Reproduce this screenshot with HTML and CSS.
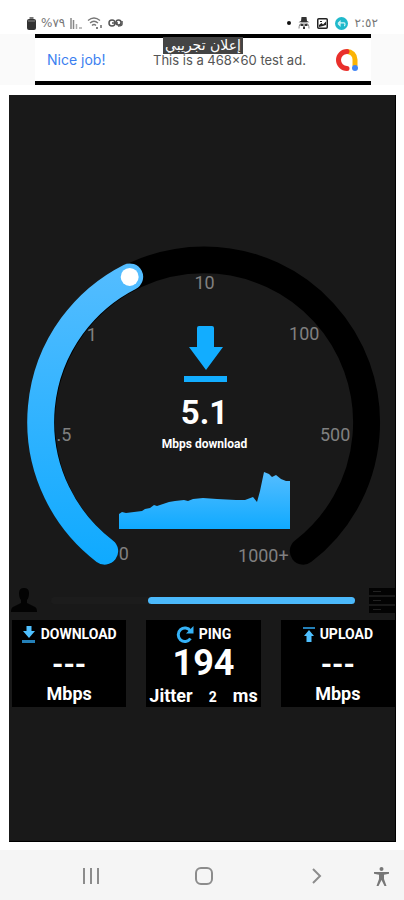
FILE: index.html
```html
<!DOCTYPE html>
<html lang="en">
<head>
<meta charset="utf-8">
<meta name="viewport" content="width=device-width, initial-scale=1">
<title>Speed test</title>
<link rel="stylesheet" href="styles.css">
</head>
<body>
<div class="screen">
  <header class="status">
    <div class="status-group">
      <svg class="ico" width="9" height="13" viewBox="0 0 9 13"><path d="M2.500 0h4v2h-4z" fill="#777"/><rect y="2" width="9" height="11" rx="2" fill="#333"/><path d="M1 4h7" stroke="#888"/></svg>
      <bdi class="status-text" dir="ltr">%٧٩</bdi>
      <svg class="ico" width="12" height="11" viewBox="0 0 12 11"><path d="M1 0v11M3.500 2v9" stroke="#888" stroke-width="1.500"/><path d="M6.500 6v5M9 10h3" stroke="#aaa" stroke-width="1.500"/></svg>
      <svg class="ico" width="16" height="12" viewBox="0 0 16 12" fill="none" stroke="#777" stroke-width="1.300"><path d="M1 3.500q6-5 12 0M3 6q4-3.500 8 0M5 8.500q2-2 4 0"/><path d="M9 11h2M14 8v3" stroke="#555"/></svg>
      <svg class="ico" width="15" height="8" viewBox="0 0 15 8" fill="none" stroke="#555" stroke-width="1.500"><circle cx="4" cy="4" r="3"/><circle cx="10.500" cy="3.500" r="2.500"/><path d="M4 4h6M14 2v3q0 2-4 2"/></svg>
    </div>
    <div class="status-group status-end">
      <svg class="ico" width="4" height="4" viewBox="0 0 4 4"><circle cx="2" cy="2" r="2" fill="#111"/></svg>
      <svg class="ico" width="12" height="12" viewBox="0 0 12 12"><path d="M3.500 0h5L9 4l2.500 1.200H.5L3 4z" fill="#333"/><path d="M1 11.500q0-5 3-5.500h4q3 .5 3 5.500" fill="none" stroke="#888"/><path d="M2.500 7h3v2h-3zM6.500 7h3v2h-3zM5 9.500h2V12H5z" fill="#333"/></svg>
      <svg class="ico" width="11" height="11" viewBox="0 0 11 11"><rect x=".75" y=".75" width="9.500" height="9.500" rx="1" fill="#fff" stroke="#222" stroke-width="1.500"/><path d="M2 9V7l2.500-2L6 6.500 9 3.500V7L6 8z" fill="#222"/><path d="M3 3.500h2" stroke="#222"/></svg>
      <svg class="ico" width="13" height="13" viewBox="0 0 13 13"><circle cx="6.500" cy="6.500" r="6.500" fill="#1fb9cb"/><path d="M3 6.500l2-2v1.300h4q1 0 1 1.500t-1 1.500M5 5.500v3l-2-2" fill="none" stroke="#d8f5f8" stroke-width="1.200"/></svg>
      <bdi class="status-text" dir="ltr">٢:٥٢</bdi>
    </div>
  </header>

  <div class="ad-band">
    <a class="ad" href="#">
      <span class="ad-title">Nice job!</span>
      <span class="ad-text">This is a 468x60 test ad.</span>
      <svg class="ad-logo" width="22" height="22" viewBox="0 0 22 22" fill="none" stroke-width="5"><path d="M11 2.500a8 8 0 0 1 8 8V17" stroke="#fbb305"/><path d="M11 2.500a8.500 8.500 0 1 0 0 17" stroke="#e92f2b" stroke-linecap="round"/><circle cx="19" cy="19" r="3" fill="#4285f4"/></svg>
      <span class="ad-tag" lang="ar" dir="rtl">إعلان تجريبي</span>
    </a>
  </div>

  <main class="panel">
    <section class="gauge">
      <svg class="dial" viewBox="-195 -182 387 340" role="img" aria-label="Download speed gauge">
        <defs>
          <linearGradient id="arc" gradientUnits="userSpaceOnUse" x1="0" y1="-160" x2="0" y2="140"><stop offset="0" stop-color="#55bdff"/><stop offset="1" stop-color="#10aaff"/></linearGradient>
        </defs>
        <path class="track" d="M-99 130A163 163 0 1 1 100 130"/>
        <path class="value" d="M-99 130A163 163 0 0 1-74-145"/>
        <circle cx="-74" cy="-145" r="9" fill="#fff"/>
        <g class="tick">
          <text x="1" y="-133">10</text>
          <text x="-112" y="-81">1</text>
          <text x="101" y="-82">100</text>
          <text x="-140" y="20">.5</text>
          <text x="132" y="20">500</text>
          <text x="-80" y="139">0</text>
          <text x="60" y="141">1000+</text>
        </g>
      </svg>
      <div class="readout">
        <svg width="44" height="57" viewBox="0 0 44 57"><path d="M16 0h13q2 0 2 2v19h9L23 44 6 21h8V2q0-2 2-2z" fill="#12adff"/><path d="M1 50h43v6H1z" fill="#12adff"/></svg>
        <strong class="speed">5.1</strong>
        <span class="speed-unit">Mbps download</span>
        <svg class="chart" width="171" height="58" viewBox="0 0 171 58"><defs><linearGradient id="area" x1="0" y1="0" x2="0" y2="1"><stop offset="0" stop-color="#55bdff"/><stop offset="1" stop-color="#10aaff"/></linearGradient></defs><path d="M0 58V43L3 41 7 42 15 41 23 40 26 38 31 37 35 34 38 35 44 33 50 31 56 30 65 29 69 30 74 28 84 27 98 28 117 29 126 29 134 26 138 31 141 20 145 1 150 3 153 6 157 4 162 8 167 10 171 10V58z" fill="url(#area)"/></svg>
      </div>
    </section>

    <section class="progress-row">
      <svg width="26" height="24" viewBox="0 0 26 24"><path d="M8 5q0-5 5-5t5 5q0 5-2 7v3l8 4q2 1 2 5H0q0-4 2-5l8-4v-3q-2-2-2-7z" fill="#030303"/></svg>
      <div class="progress"><div class="progress-fill"></div></div>
      <svg width="26" height="25" viewBox="0 0 26 25"><path d="M0 0h26v7H0zM0 9h26v7H0zM0 18h26v7H0z" fill="#030303"/><path d="M4 3.500h8M4 12.500h8M4 21.500h8" stroke="#222"/></svg>
    </section>

    <section class="cards">
      <article class="card">
        <h2 class="card-title"><svg width="14" height="17" viewBox="0 0 14 17"><path d="M4.500 0h5v5H13l-6 7-6-7h3.500z" fill="#4fc0ff"/><path d="M0 15.500h13" stroke="#2480b8" stroke-width="3"/></svg>DOWNLOAD</h2>
        <p class="card-value card-empty">---</p>
        <p class="card-unit">Mbps</p>
      </article>
      <article class="card">
        <h2 class="card-title"><svg width="18" height="17" viewBox="0 0 18 17"><path d="M14.500 5A6.700 6.700 0 1 0 14.500 12.500" fill="none" stroke="#35b2f7" stroke-width="3"/><path d="M17.500 0v7.500H10z" fill="#35b2f7"/></svg>PING</h2>
        <p class="card-value">194</p>
        <p class="card-unit jitter"><span>Jitter</span><span class="jitter-value">2</span><span>ms</span></p>
      </article>
      <article class="card">
        <h2 class="card-title"><svg width="12" height="15" viewBox="0 0 12 15"><path d="M0 1h12" stroke="#2480b8" stroke-width="2"/><path d="M6 3l5 6H8.500v6h-5V9H1z" fill="#4fc0ff"/></svg>UPLOAD</h2>
        <p class="card-value card-empty">---</p>
        <p class="card-unit">Mbps</p>
      </article>
    </section>
  </main>

  <nav class="nav">
    <button class="nav-btn" aria-label="Recent apps"><svg width="16" height="16" viewBox="0 0 16 16"><path d="M1 0v16M8 0v16M15 0v16" stroke="#8c8c8c" stroke-width="2"/></svg></button>
    <button class="nav-btn" aria-label="Home"><svg width="18" height="18" viewBox="0 0 18 18"><rect x="1" y="1" width="16" height="16" rx="5" fill="none" stroke="#8c8c8c" stroke-width="2"/></svg></button>
    <button class="nav-btn" aria-label="Back"><svg width="10" height="16" viewBox="0 0 10 16"><path d="M1 1l7 7-7 7" fill="none" stroke="#8c8c8c" stroke-width="2"/></svg></button>
    <button class="nav-btn nav-access" aria-label="Accessibility"><svg width="15" height="19" viewBox="0 0 15 19"><circle cx="7.500" cy="2" r="2" fill="#777"/><path d="M0 5h15v1.800l-5 1V12l2.500 7h-2L7.500 13l-3 6h-2L5 12V7.800l-5-1z" fill="#777"/></svg></button>
  </nav>
</div>
</body>
</html>
```
FILE: styles.css
```css
* { box-sizing: border-box; }

body {
  margin: 0;
  background: #fff;
  font-family: Roboto, "Noto Sans", sans-serif;
}

h2, p { margin: 0; }
svg { display: block; flex: none; }

.screen {
  display: flex;
  flex-direction: column;
  min-height: 100vh;
}

/* Status bar */
.status {
  display: flex;
  justify-content: space-between;
  align-items: center;
  height: 34px;
  padding: 12px 26px 0 27px;
}
.status-group {
  display: flex;
  align-items: center;
  gap: 5px;
}
.status-end { gap: 7px; }
.status-text {
  color: #777;
  font: 12px/16px "DejaVu Sans", sans-serif;
}

/* Ad banner */
.ad-band {
  padding: 0 33px 0 35px;
  background: #fafafa;
}
.ad {
  position: relative;
  display: flex;
  align-items: center;
  height: 51px;
  padding: 0 13px 0 12px;
  border: solid #000;
  border-width: 4px 0;
  background: #fff;
  font-family: Inter, sans-serif;
  text-decoration: none;
}
.ad-title {
  width: 106px;
  color: #3c7ff0;
  font-size: 14px;
}
.ad-text {
  color: #555;
  font-size: 13px;
  white-space: nowrap;
}
.ad-logo { margin-left: auto; }
.ad-tag {
  position: absolute;
  top: -1px;
  left: 128px;
  width: 80px;
  height: 17px;
  background: #444;
  color: #fff;
  font: 14px/16px "DejaVu Sans", sans-serif;
  text-align: center;
  white-space: nowrap;
}

/* Speed panel */
.panel {
  flex: 1;
  margin: 10px 8px 8px 9px;
  padding-top: 145px;
  border: 1px solid #000;
  border-width: 0 1px 1px 0;
  background: #191919;
}
.gauge { display: grid; }
.dial {
  grid-area: 1 / 1;
  width: 100%;
}
.track, .value {
  fill: none;
  stroke: #000;
  stroke-width: 27px;
  stroke-linecap: round;
}
.value { stroke: url(#arc); }
.tick {
  fill: #808080;
  font-size: 18px;
  text-anchor: middle;
}
.readout {
  grid-area: 1 / 1;
  display: flex;
  flex-direction: column;
  align-items: center;
  padding: 86px 0 0 5px;
  color: #fff;
}
.speed {
  margin-top: 10px;
  font-size: 33px;
  font-weight: 700;
  line-height: 40px;
}
.speed-unit {
  margin-top: 4px;
  font-size: 12px;
  font-weight: 700;
  line-height: 14px;
}
.chart { margin-top: 20px; }

.progress-row {
  display: flex;
  align-items: center;
  gap: 14px;
  height: 26px;
  margin-top: 8px;
  padding-left: 2px;
}
.progress {
  flex: 1;
  height: 7px;
  border-radius: 4px;
  background: #1c1c1c;
}
.progress-fill {
  width: 68%;
  height: 7px;
  margin-left: auto;
  border-radius: 4px;
  background: #4bb9fb;
}

/* Result cards */
.cards {
  display: grid;
  grid-template-columns: repeat(3, 1fr);
  gap: 20px;
  margin-top: 7px;
  padding-left: 3px;
}
.card {
  height: 87px;
  padding-top: 5px;
  background: #000;
  color: #fff;
  text-align: center;
}
.card-title {
  display: flex;
  justify-content: center;
  align-items: center;
  gap: 5px;
  height: 18px;
  font-size: 14px;
  font-weight: 700;
}
.card-value {
  font-size: 36px;
  font-weight: 700;
  line-height: 40px;
}
.card-empty {
  padding-top: 2px;
  font-size: 29px;
  line-height: 38px;
}
.card-unit {
  font-size: 18px;
  font-weight: 700;
  line-height: 22px;
}
.jitter {
  display: flex;
  justify-content: space-between;
  align-items: baseline;
  padding: 2px 3px 0;
}
.jitter-value { font-size: 14px; }

/* System navigation */
.nav {
  display: grid;
  grid-template-columns: 1fr 1fr 1fr 30px;
  height: 50px;
  padding-left: 34px;
  background: #f5f5f5;
}
.nav-btn {
  display: flex;
  justify-content: center;
  align-items: center;
  padding: 2px 0 0;
  border: 0;
  background: none;
}
.nav-access { justify-content: flex-start; }
```
